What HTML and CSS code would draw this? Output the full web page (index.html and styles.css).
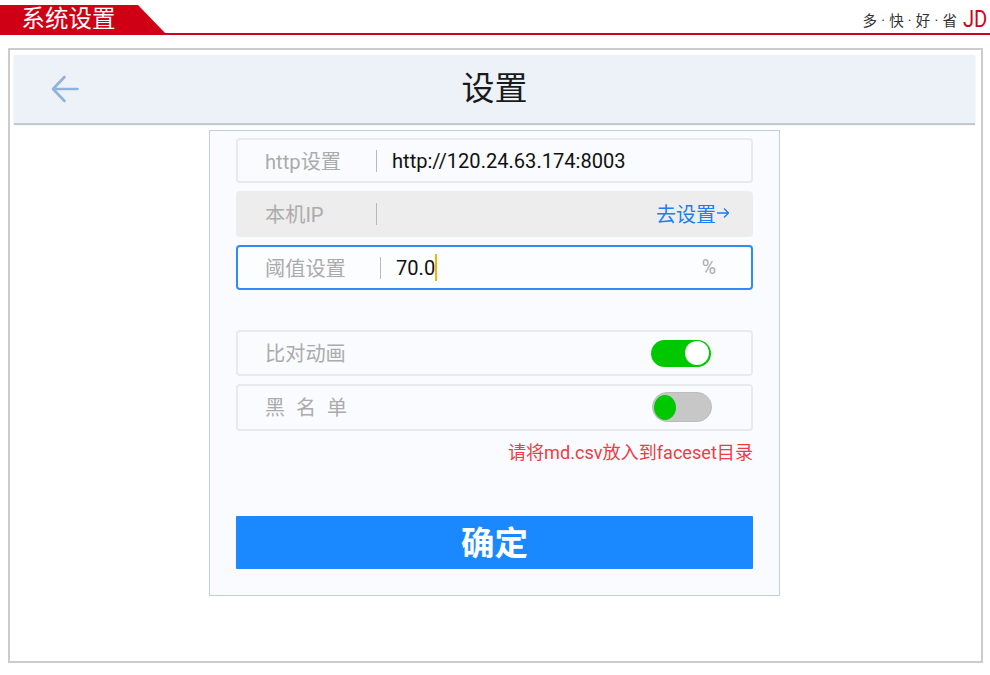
FILE: index.html
```html
<!DOCTYPE html>
<html lang="zh-CN">
<head>
<meta charset="utf-8">
<title>系统设置</title>
<link rel="stylesheet" href="styles.css">
</head>
<body>
<div class="topbar">
  <div class="tab">系统设置</div>
  <div class="slogan"><span class="slogan-text">多 · 快 · 好 · 省</span><span class="jd">JD</span></div>
</div>
<div class="frame">
  <header class="head">
    <svg class="back" width="28" height="28" viewBox="0 0 28 28" fill="none" stroke="#8fb3da" stroke-width="2.600" stroke-linecap="round" stroke-linejoin="round"><path d="M2 14H26.500M13.500 2 2 14 13.500 26"/></svg>
    <h1 class="title">设置</h1>
  </header>
  <main class="card">
    <div class="row row-1"><span class="label">http设置</span><i class="sep"></i><span class="value">http://120.24.63.174:8003</span></div>
    <div class="row row-2 disabled"><span class="label">本机IP</span><i class="sep"></i><span class="link">去设置<svg class="arrow" width="12" height="12" viewBox="0 0 12 12" fill="none" stroke="#1a7ef0" stroke-width="1.300"><path d="M0 6H11M7 1.500 11.500 6 7 10.500"/></svg></span></div>
    <div class="row row-3 focus"><span class="label label-wide">阈值设置</span><i class="sep"></i><span class="value value-cursor">70.0<i class="caret"></i></span><span class="unit">%</span></div>
    <div class="row row-4 gap-top"><span class="label">比对动画</span><span class="switch on"><i class="knob"></i></span></div>
    <div class="row row-5"><span class="label spaced">黑名单</span><span class="switch off"><i class="knob"></i></span></div>
    <p class="hint">请将md.csv放入到faceset目录</p>
    <button class="confirm" type="button">确定</button>
  </main>
</div>
</body>
</html>
```
FILE: styles.css
```css
* { box-sizing: border-box; }
html, body { margin: 0; padding: 0; }
body {
  width: 990px;
  height: 675px;
  overflow: hidden;
  background: #fff;
  font-family: Roboto, "Noto Sans CJK SC", sans-serif;
}
.topbar {
  height: 35px;
  display: flex;
  justify-content: space-between;
  align-items: flex-end;
  border-bottom: 2px solid #d0021b;
}
.tab {
  width: 167px;
  height: 30px;
  margin-bottom: -2px;
  padding: 0 0 2px 21.500px;
  background: #cf0016;
  clip-path: polygon(0 0, 138px 0, 167px 100%, 0 100%);
  color: #fff;
  font-size: 23.500px;
  line-height: 29px;
  white-space: nowrap;
}
.slogan {
  display: flex;
  align-items: center;
  height: 30px;
  padding-top: 2px;
  padding-right: 4px;
}
.slogan-text {
  font-size: 14.500px;
  word-spacing: 0.600px;
  color: #333;
  white-space: pre;
  margin-right: 6px;
}
.jd {
  width: 23px;
  font-family: Roboto, sans-serif;
  font-weight: 400;
  font-size: 24px;
  line-height: 26px;
  color: #d0021b;
  white-space: nowrap;
  transform: scaleX(0.840);
  transform-origin: left center;
}
.frame {
  width: 975px;
  height: 615px;
  margin: 13px 0 0 8px;
  padding: 5px 6px 0 4px;
  border: 2px solid #ccc;
}
.head {
  height: 68px;
  display: flex;
  align-items: center;
  justify-content: center;
  position: relative;
  background: #edf2f8;
  box-shadow: 0 2px 1px #c4c9ce;
}
.back {
  position: absolute;
  left: 37px;
  top: 20px;
}
.title {
  margin: 0;
  font-size: 33px;
  font-weight: 400;
  color: #1a1a1a;
  line-height: 68px;
}
.card {
  width: 571px;
  height: 466px;
  margin: 7px 0 0 195px;
  padding: 7px 26px 0;
  border: 1px solid #bdd0e2;
  background: #f9fbfe;
}
.row {
  display: flex;
  align-items: center;
  margin-bottom: 8px;
  padding: 0 0 0 27px;
  border: 2px solid #e8eaed;
  border-radius: 4px;
  background: #fafbfe;
}
.row-1 { height: 45px; }
.row-2 { height: 46px; }
.row-3 { height: 45px; margin-bottom: 40px; }
.row-4 { height: 46px; }
.row-5 { height: 47px; margin-bottom: 0; }
.row-2 .label, .row-2 .link, .row-4 .label, .row-5 .label, .row-5 .switch { margin-bottom: 2px; }
.disabled { background: #ededee; border-color: #ededee; }
.focus { border-color: #2f8cf5; background: #fcfdff; }
.label {
  width: 111px;
  flex: none;
  font-size: 20.200px;
  color: #ababab;
  white-space: nowrap;
}
.label-wide { width: 115px; }
.row-5 .spaced { width: auto; letter-spacing: 11px; font-size: 20px; }
.sep {
  width: 1px;
  height: 22px;
  flex: none;
  background: #b9b9b9;
}
.value {
  margin-left: 15px;
  font-size: 20.100px;
  color: #111;
  white-space: nowrap;
}
.value-cursor { display: flex; align-items: center; }
.caret {
  width: 2px;
  height: 27px;
  background: #f5b400;
}
.link {
  margin-left: auto;
  margin-right: 22px;
  font-size: 20px;
  color: #1a7ef0;
  white-space: nowrap;
  display: flex;
  align-items: center;
}
.arrow { margin-left: 1px; }
.unit {
  margin-left: auto;
  margin-right: 35px;
  font-size: 19.500px;
  color: #a9a9a9;
}
.switch {
  margin-left: auto;
  display: flex;
  align-items: center;
  width: 60px;
  position: relative;
}
.switch .knob {
  position: absolute;
  border-radius: 50%;
}
.on { margin-right: 40px; background: #00c800; height: 27px; border-radius: 14px; }
.on .knob {
  right: 2px;
  top: 1.500px;
  width: 24px;
  height: 24px;
  background: #fff;
}
.off { margin-right: 39px; background: #c7c7c7; height: 30px; border: 1px solid #bdbdbd; border-radius: 15px; }
.off .knob {
  left: 1px;
  top: 2px;
  width: 22px;
  height: 25px;
  background: #00c800;
}
.hint {
  margin: 9px 0 0;
  text-align: right;
  font-size: 18.100px;
  line-height: 26px;
  color: #ee3b45;
}
.confirm {
  display: block;
  width: 517px;
  height: 53px;
  margin-top: 50px;
  border: 0;
  border-radius: 1px;
  padding: 0 0 4px;
  background: #1a88ff;
  color: #fff;
  font-family: Roboto, "Noto Sans CJK SC", sans-serif;
  font-size: 33.500px;
  font-weight: 700;
}
```
